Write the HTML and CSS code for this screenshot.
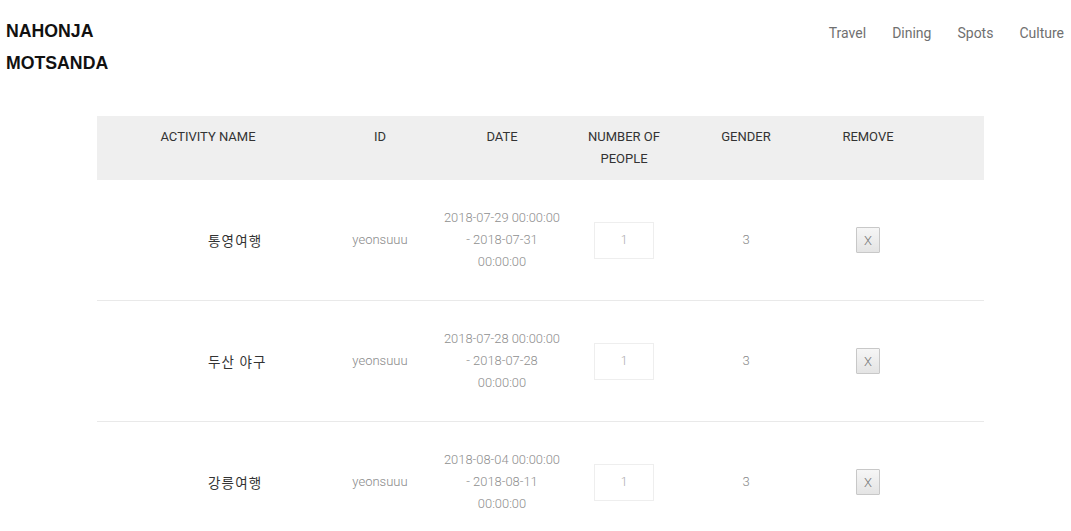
FILE: index.html
```html
<!DOCTYPE html>
<html>
<head>
<meta charset="utf-8">
<link rel="stylesheet" href="styles.css">
</head>
<body>
<header class="top">
  <div class="logo">NAHONJA<br>MOTSANDA</div>
  <nav class="nav">
    <a>Travel</a><a>Dining</a><a>Spots</a><a>Culture</a>
  </nav>
</header>
<main class="table">
  <div class="row head">
    <div class="cell">ACTIVITY NAME</div>
    <div class="cell">ID</div>
    <div class="cell">DATE</div>
    <div class="cell">NUMBER OF<br>PEOPLE</div>
    <div class="cell">GENDER</div>
    <div class="cell">REMOVE</div>
  </div>
  <div class="row item">
    <div class="cell name">통영여행</div>
    <div class="cell id">yeonsuuu</div>
    <div class="cell date">2018-07-29 00:00:00<br>- 2018-07-31<br>00:00:00</div>
    <div class="cell"><span class="qty">1</span></div>
    <div class="cell gender">3</div>
    <div class="cell"><button class="rm">X</button></div>
  </div>
  <div class="row item">
    <div class="cell name">두산 야구</div>
    <div class="cell id">yeonsuuu</div>
    <div class="cell date">2018-07-28 00:00:00<br>- 2018-07-28<br>00:00:00</div>
    <div class="cell"><span class="qty">1</span></div>
    <div class="cell gender">3</div>
    <div class="cell"><button class="rm">X</button></div>
  </div>
  <div class="row item">
    <div class="cell name">강릉여행</div>
    <div class="cell id">yeonsuuu</div>
    <div class="cell date">2018-08-04 00:00:00<br>- 2018-08-11<br>00:00:00</div>
    <div class="cell"><span class="qty">1</span></div>
    <div class="cell gender">3</div>
    <div class="cell"><button class="rm">X</button></div>
  </div>
</main>
</body>
</html>
```
FILE: styles.css
```css
html, body {
  margin: 0;
  padding: 0;
  background: #fff;
}
body {
  font-family: Roboto, "Noto Sans CJK KR", sans-serif;
  color: #333;
}
.top {
  display: flex;
  justify-content: space-between;
  align-items: flex-start;
  padding: 15px 7px 0 6px;
  height: 101px;
  box-sizing: border-box;
}
.logo {
  font-family: "Liberation Sans", Arial, sans-serif;
  font-weight: bold;
  font-size: 17.7px;
  line-height: 32px;
  color: #111;
}
.nav {
  display: flex;
  gap: 26px;
  padding-top: 9px;
  font-size: 14px;
  line-height: 18px;
  color: #707070;
}
.table {
  margin-left: 97px;
  width: 887px;
}
.row {
  display: grid;
  grid-template-columns: 222px repeat(5, 122px) 1fr;
  align-items: center;
}
.cell {
  text-align: center;
}
.head {
  background: #efefef;
  align-items: start;
  padding: 10px 0 11px;
  font-size: 13px;
  line-height: 21.5px;
  color: #333;
  margin-top: 15px;
}
.item {
  padding: 27px 0;
  border-bottom: 1px solid #e9e9e9;
  font-size: 13px;
  line-height: 22px;
  color: #888;
  font-weight: 300;
}
.item .name {
  text-align: left;
  padding-left: 111px;
  font-family: "Noto Sans CJK KR", sans-serif;
  font-size: 13.5px;
  letter-spacing: 1.2px;
  font-weight: 400;
  color: #333;
}
.date {
  font-size: 12.9px;
  color: #8f8f8f;
}
.qty {
  display: inline-block;
  width: 60px;
  height: 37px;
  box-sizing: border-box;
  border: 1px solid #eee;
  line-height: 35px;
  font-size: 12px;
  color: #aaa;
  vertical-align: middle;
}
.gender {
  color: #888;
}
.rm {
  width: 24px;
  height: 26px;
  padding: 0;
  border: 1px solid #c8c8c8;
  border-radius: 1px;
  background: linear-gradient(#f6f6f6, #e4e4e4);
  color: #777;
  font-family: Roboto, sans-serif;
  font-size: 13px;
  font-weight: 300;
  vertical-align: middle;
}
```
